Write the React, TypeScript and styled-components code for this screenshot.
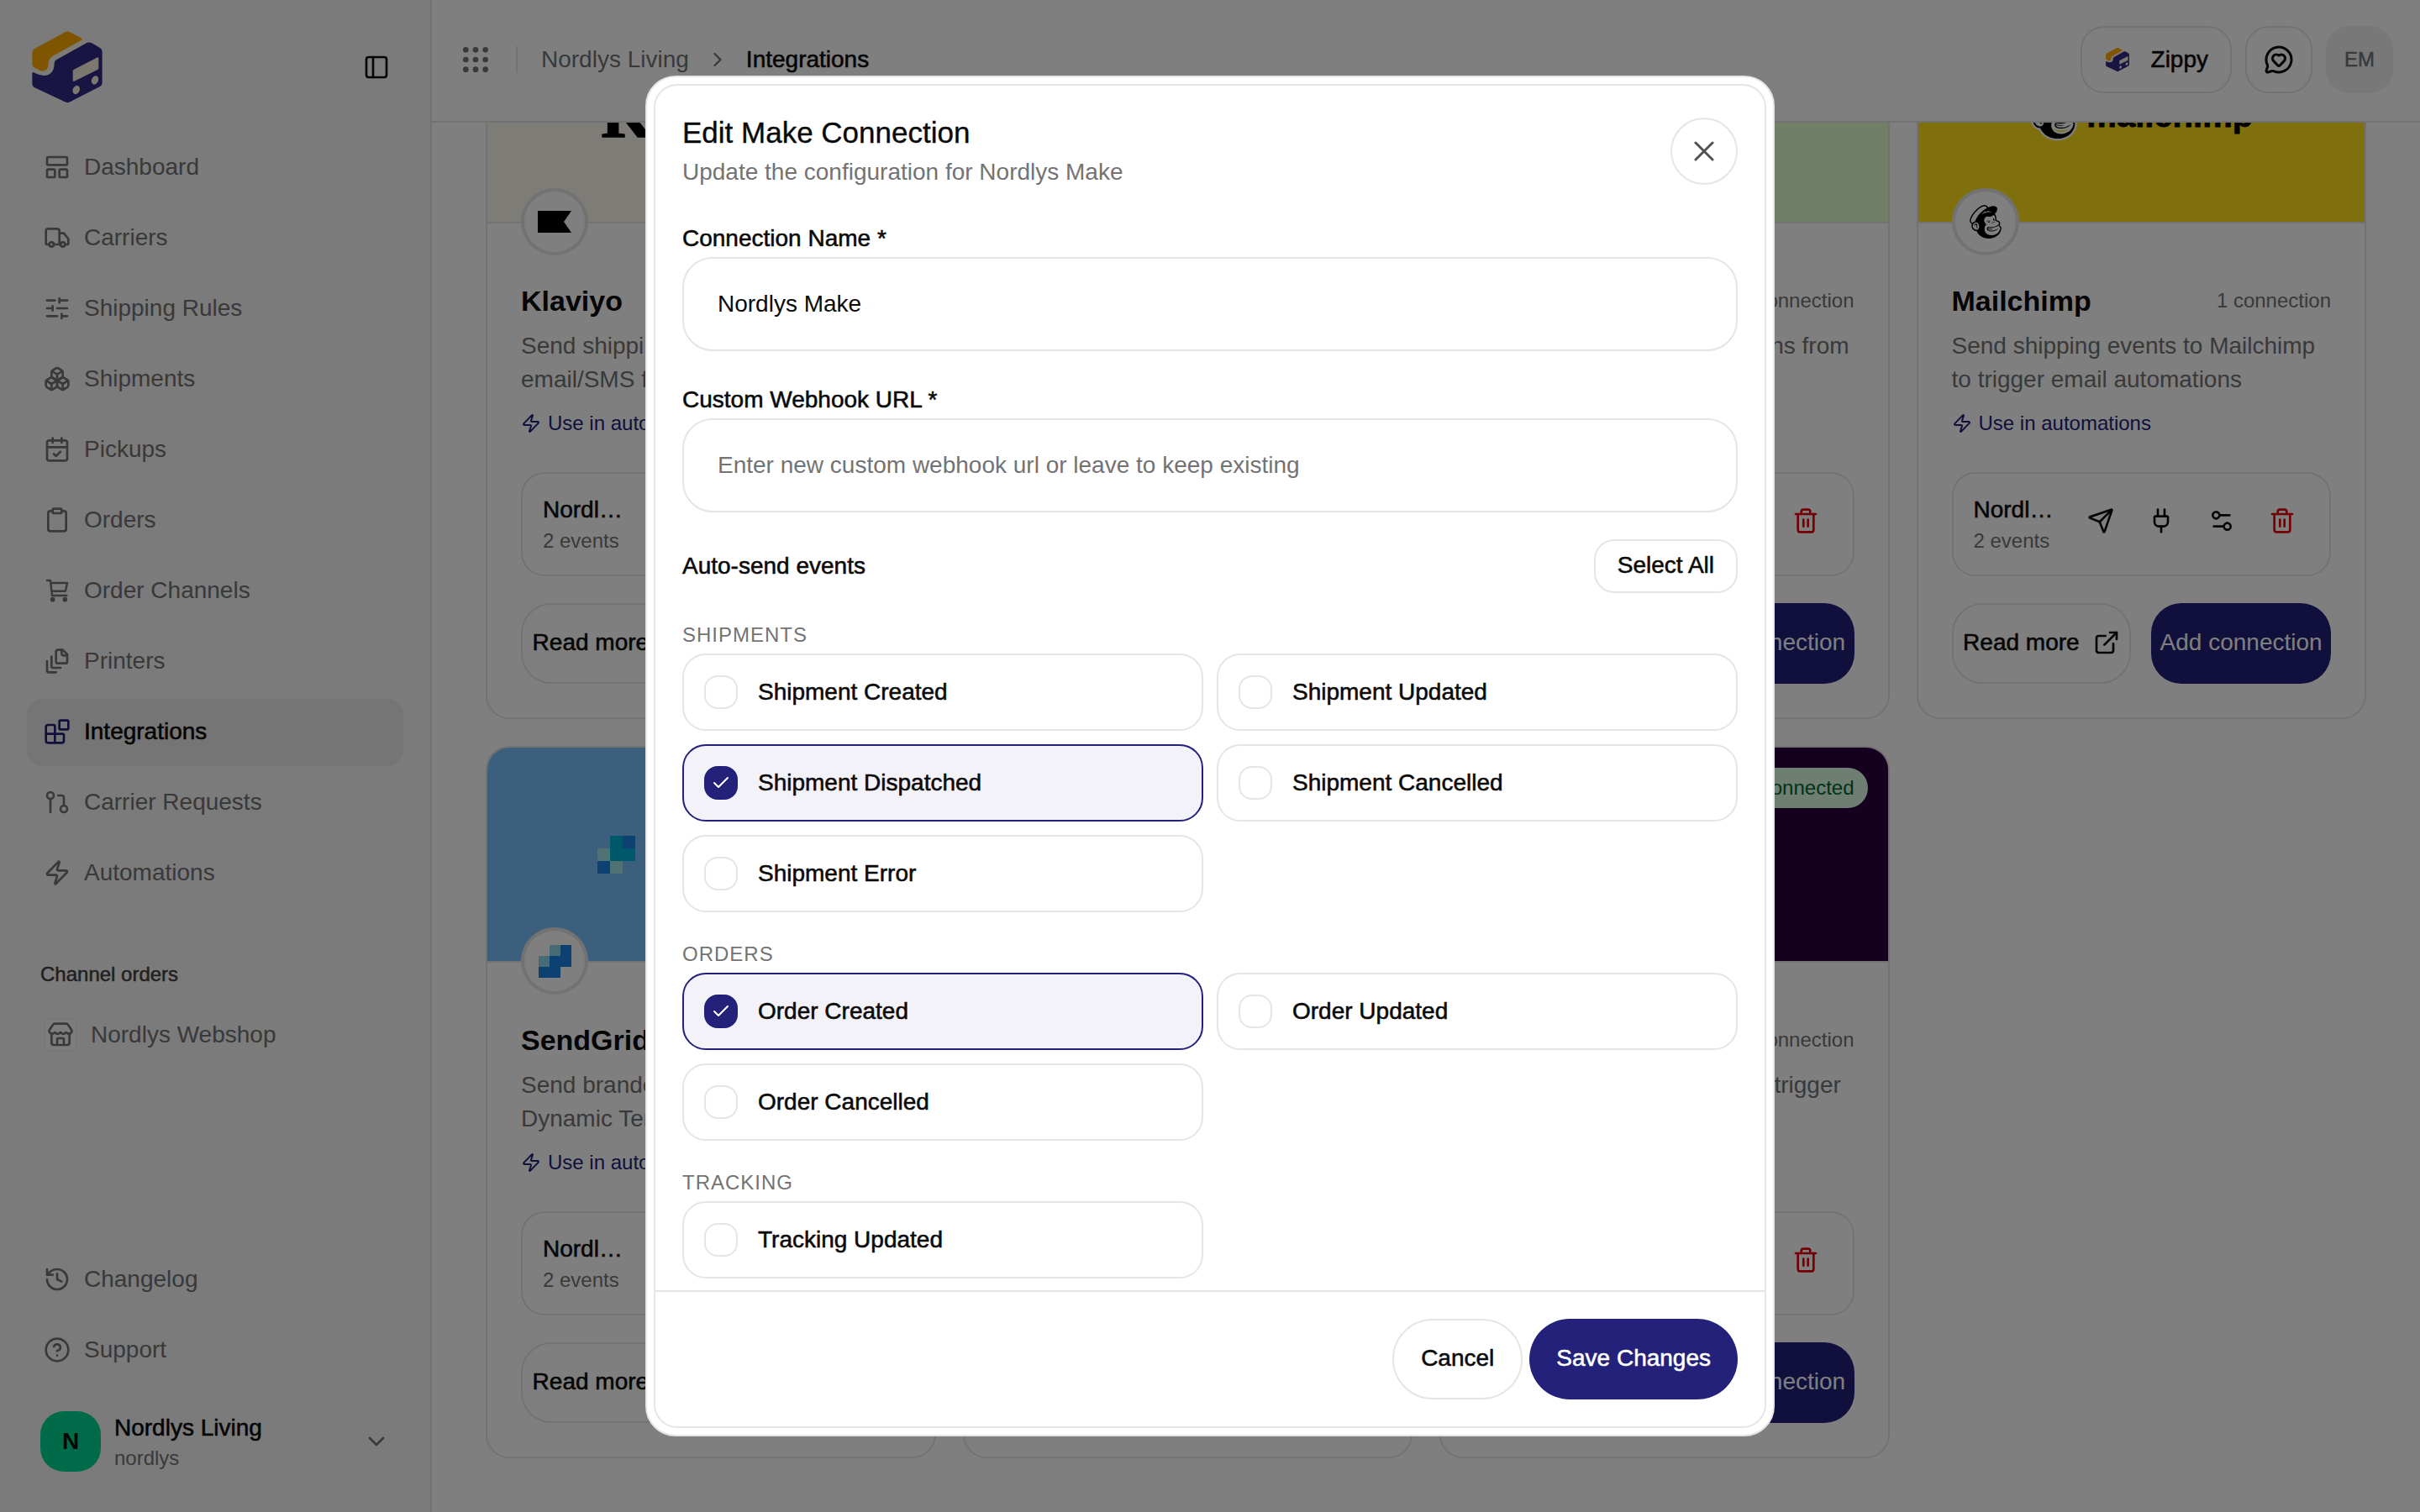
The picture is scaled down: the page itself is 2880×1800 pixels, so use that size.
import React, { useLayoutEffect, useRef, useState } from 'react';
import styled, { createGlobalStyle, css } from 'styled-components';
import {
  PanelLeft, LayoutPanelTop, Truck, SlidersHorizontal, Boxes, CalendarCheck, Clipboard, Blocks,
  GitPullRequest, Zap, History, HelpCircle, Store, ChevronDown, ChevronRight, Grip,
  MessageCircleHeart, Send, Plug, Settings2, Trash2, ExternalLink, X, Check,
} from 'lucide-react';
import { SiMailchimp } from 'react-icons/si';

const color = {
  ink: '#0a0a0a',
  muted: '#737373',
  line: '#e5e5e5',
  navy: '#232179',
  tint: '#f3f2f8',
  side: '#f6f6f6',
  hover: '#eaeaea',
};

const GlobalStyle = createGlobalStyle`
  *, *::before, *::after { box-sizing: border-box; }
  html, body { margin: 0; height: 100%; }
  body, button, input {
    font-family: "Liberation Sans", Arial, sans-serif;
    font-size: 28px;
    line-height: 40px;
    color: ${color.ink};
  }
  body { background: #fff; overflow: hidden; }
  h1, h2, h3, h4, p, ul, fieldset { margin: 0; padding: 0; border: 0; font-size: 28px; font-weight: 400; }
  ul { list-style: none; }
  a { color: inherit; text-decoration: none; }
  button { background: none; border: 0; padding: 0; cursor: pointer; }
  svg { flex: none; display: block; }
`;

const medium = css`
  font-weight: 500;
  -webkit-text-stroke: 0.02em currentColor;
`;

/* ---------- page frame ---------- */

const Shell = styled.div`
  display: grid;
  grid-template-columns: 514px minmax(0, 1fr);
  height: 100vh;
`;

const Sidebar = styled.aside`
  display: flex;
  flex-direction: column;
  min-height: 0;
  padding: 32px;
  background: ${color.side};
  border-right: 2px solid ${color.line};
`;

const SidebarTop = styled.div`
  display: flex;
  align-items: center;
  justify-content: space-between;
  height: 96px;
  padding-right: 16px;
  margin-bottom: 32px;
`;

const NavList = styled.ul`
  display: flex;
  flex-direction: column;
  gap: 4px;
`;

const NavLink = styled.a<{ $active?: boolean }>`
  display: flex;
  align-items: center;
  gap: 16px;
  height: 80px;
  padding: 0 20px 2px;
  border-radius: 20px;
  color: ${color.muted};
  ${p => p.$active && css`
    ${medium}
    background: ${color.hover};
    color: ${color.ink};
    svg { color: ${color.navy}; }
  `}
`;

const GroupTitle = styled.h2`
  ${medium}
  margin-top: 60px;
  padding-left: 16px;
  font-size: 24px;
  line-height: 40px;
  color: #404040;
`;

const ChannelLink = styled.a`
  display: flex;
  align-items: center;
  gap: 16px;
  height: 80px;
  margin-top: 12px;
  padding-left: 20px;
  color: ${color.muted};
`;

const ChannelIcon = styled.span`
  display: grid;
  place-items: center;
  width: 40px;
  height: 40px;
  border: 2px solid #efefef;
  border-radius: 8px;
  background: #fafafa;
`;

const SidebarBottom = styled.div`
  margin-top: auto;
`;

const Account = styled.button`
  display: grid;
  grid-template-columns: 72px 1fr 32px;
  align-items: center;
  gap: 16px;
  width: 100%;
  margin: 28px 0 12px;
  padding: 4px 16px;
  text-align: left;
`;

const AccountMark = styled.span`
  display: grid;
  place-items: center;
  height: 72px;
  border-radius: 28px;
  background: #00d492;
  font-weight: 700;
`;

const AccountText = styled.span`
  display: flex;
  flex-direction: column;
  strong { ${medium} line-height: 40px; }
  small { font-size: 24px; line-height: 32px; color: ${color.muted}; }
`;

const Main = styled.div`
  display: flex;
  flex-direction: column;
  min-width: 0;
  min-height: 0;
`;

const Header = styled.header`
  display: flex;
  align-items: center;
  height: 146px;
  flex: none;
  padding: 0 32px 2px;
  border-bottom: 2px solid ${color.line};
`;

const Crumbs = styled.nav`
  display: flex;
  align-items: center;
  gap: 20px;
  padding-left: 28px;
  color: ${color.muted};
`;

const Divider = styled.span`
  width: 2px;
  height: 32px;
  background: ${color.line};
`;

const CrumbNow = styled.span`
  ${medium}
  color: ${color.ink};
`;

const HeaderLeft = styled.div`
  display: flex;
  align-items: center;
  button + span { margin-left: 28px; }
`;

const HeaderRight = styled.div`
  display: flex;
  gap: 16px;
  margin-left: auto;
`;

const HeaderButton = styled.button`
  ${medium}
  display: flex;
  align-items: center;
  justify-content: center;
  gap: 24px;
  min-width: 80px;
  height: 80px;
  padding: 0 26px;
  border: 2px solid ${color.line};
  border-radius: 28px;
`;

const IconButton = styled(HeaderButton)`
  padding: 0;
`;

const Initials = styled(HeaderButton)`
  padding: 0;
  border-color: #f1f1f1;
  background: #f1f1f1;
  font-size: 24px;
  color: ${color.muted};
`;

const Scroll = styled.main`
  flex: 1;
  min-height: 0;
  overflow-y: auto;
  scrollbar-width: none;
  padding: 64px;
`;

/* ---------- integration cards ---------- */

const CardGrid = styled.div`
  display: grid;
  grid-template-columns: repeat(4, minmax(0, 1fr));
  gap: 32px;
`;

const Card = styled.article`
  display: flex;
  flex-direction: column;
  border: 2px solid ${color.line};
  border-radius: 28px;
  overflow: hidden;
`;

const Banner = styled.div<{ $bg: string }>`
  position: relative;
  display: flex;
  align-items: center;
  justify-content: center;
  gap: 12px;
  height: 256px;
  border-bottom: 2px solid ${color.line};
  background: ${p => p.$bg};
`;

const Wordmark = styled.span<{ $size: number; $ink?: string; $serif?: boolean }>`
  font-family: ${p => (p.$serif ? '"Liberation Serif", serif' : '"Liberation Sans", sans-serif')};
  font-size: ${p => p.$size}px;
  line-height: 1;
  font-weight: 700;
  color: ${p => p.$ink || '#000'};
  -webkit-text-stroke: 0.02em currentColor;
`;

const Status = styled.span`
  position: absolute;
  top: 24px;
  right: 24px;
  padding: 8px 16px;
  border-radius: 24px;
  background: #dcfce7;
  font-size: 24px;
  line-height: 32px;
  color: #016630;
`;

const Badge = styled.span`
  position: absolute;
  left: 40px;
  bottom: -40px;
  display: grid;
  place-items: center;
  width: 80px;
  height: 80px;
  border: 4px solid ${color.line};
  border-radius: 50%;
  background: #fff;
`;

const CardBody = styled.div`
  padding: 68px 40px 40px;
`;

const CardHead = styled.div`
  display: flex;
  align-items: center;
  justify-content: space-between;
  h3 { font-size: 34px; line-height: 48px; font-weight: 700; }
  span { font-size: 24px; color: ${color.muted}; }
`;

const CardText = styled.p`
  min-height: 80px;
  margin-top: 10px;
  color: ${color.muted};
`;

const AutomationLink = styled.a`
  display: flex;
  align-items: center;
  gap: 8px;
  margin-top: 16px;
  font-size: 24px;
  line-height: 32px;
  color: ${color.navy};
`;

const Connection = styled.div`
  display: flex;
  align-items: flex-start;
  gap: 16px;
  height: 124px;
  margin-top: 42px;
  padding: 24px;
  border: 2px solid ${color.line};
  border-radius: 28px;
`;

const ConnectionText = styled.div`
  flex: 1;
  min-width: 0;
  h4 { ${medium} line-height: 38px; overflow: hidden; text-overflow: ellipsis; white-space: nowrap; }
  p { padding-top: 2px; font-size: 24px; line-height: 32px; color: ${color.muted}; }
`;

const Tools = styled.div`
  display: flex;
  gap: 8px;
`;

const ToolButton = styled.button<{ $danger?: boolean }>`
  display: grid;
  place-items: center;
  width: 64px;
  height: 64px;
  color: ${p => (p.$danger ? '#e7000b' : color.ink)};
`;

const CardActions = styled.div`
  display: grid;
  grid-template-columns: 1fr 1fr;
  gap: 24px;
  margin-top: 32px;
`;

const outline = css`
  border: 2px solid ${color.line};
  background: #fff;
`;

const filled = css`
  background: ${color.navy};
  color: #fff;
`;

const CardButton = styled.button<{ $primary?: boolean }>`
  display: flex;
  align-items: center;
  justify-content: center;
  gap: 16px;
  height: 96px;
  padding-bottom: 2px;
  border-radius: 36px;
  white-space: nowrap;
  ${p => (p.$primary ? filled : css`${outline} ${medium}`)}
`;

/* ---------- dialog ---------- */

const Overlay = styled.div`
  position: fixed;
  inset: 0;
  display: grid;
  place-items: center;
  background: rgba(0, 0, 0, 0.5);
`;

const DialogFrame = styled.div`
  display: flex;
  width: min(1344px, 94vw);
  height: 90vh;
  padding: 8px;
  border: 2px solid ${color.line};
  border-radius: 36px;
  background: #fff;
`;

const DialogPanel = styled.form`
  display: flex;
  flex-direction: column;
  flex: 1;
  min-width: 0;
  border: 2px solid ${color.line};
  border-radius: 28px;
`;

const DialogHead = styled.div`
  display: flex;
  align-items: center;
  justify-content: space-between;
  height: 92px;
  margin: 32px 32px 0;
  h2 { font-size: 35px; line-height: 46px; -webkit-text-stroke: 0.01em currentColor; }
  p { margin-top: 4px; color: ${color.muted}; }
`;

const CloseButton = styled.button`
  display: grid;
  place-items: center;
  width: 80px;
  height: 80px;
  border: 2px solid ${color.line};
  border-radius: 50%;
  color: #525252;
`;

const DialogBody = styled.div`
  flex: 1;
  min-height: 0;
  overflow-y: auto;
  scrollbar-width: none;
  margin-top: 36px;
  padding: 0 32px;
`;

const Field = styled.div`
  display: flex;
  flex-direction: column;
  & + & { margin-top: 36px; }
  label { ${medium} line-height: 44px; }
`;

const TextInput = styled.input`
  width: 100%;
  height: 112px;
  padding: 0 40px;
  border: 2px solid ${color.line};
  border-radius: 36px;
  background: #fff;
  outline: none;
  &::placeholder { color: ${color.muted}; opacity: 1; }
`;

const EventsHead = styled.div`
  display: flex;
  align-items: center;
  justify-content: space-between;
  margin-top: 32px;
  h3 { ${medium} }
`;

const SelectAll = styled.button`
  ${medium}
  ${outline}
  height: 64px;
  padding: 0 26px 2px;
  border-radius: 24px;
`;

const EventGroup = styled.fieldset`
  margin-top: 32px;
  min-width: 0;
  legend {
    padding: 0;
    margin-bottom: 4px;
    font-size: 24px;
    line-height: 36px;
    letter-spacing: 1px;
    text-transform: uppercase;
    color: ${color.muted};
  }
`;

const EventGrid = styled.div`
  display: grid;
  grid-template-columns: 1fr 1fr;
  gap: 16px;
`;

const EventOption = styled.label<{ $on: boolean }>`
  ${medium}
  display: flex;
  align-items: center;
  gap: 24px;
  height: 92px;
  padding: 0 24px;
  border: 2px solid ${p => (p.$on ? color.navy : color.line)};
  border-radius: 28px;
  background: ${p => (p.$on ? color.tint : '#fff')};
`;

const Tick = styled.span`
  display: grid;
  place-items: center;
  width: 40px;
  height: 40px;
  color: #fff;
  > * { grid-area: 1 / 1; }
  svg { pointer-events: none; z-index: 1; }
  input {
    appearance: none;
    width: 40px;
    height: 40px;
    margin: 0;
    border: 2px solid ${color.line};
    border-radius: 16px;
    background: #fff;
  }
  input:checked { border-color: ${color.navy}; background: ${color.navy}; }
`;

const DialogFoot = styled.div`
  display: flex;
  justify-content: flex-end;
  gap: 8px;
  padding: 32px;
  border-top: 2px solid ${color.line};
`;

const FootButton = styled.button<{ $primary?: boolean }>`
  ${medium}
  ${p => (p.$primary ? filled : outline)}
  height: 96px;
  padding: 0 32px 2px;
  border-radius: 48px;
`;

/* ---------- drawings ---------- */

const Logo = ({ size }: { size: number }) => (
  <svg width={size} height={size} viewBox="36 36 288 288" aria-hidden="true">
    <path fill="#fbf6ea" d="M60 118 L181 55 L300 115 V245 L181 305 L60 248Z" />
    <path fill="#ffab00" d="M55 130 Q55 118 65 113 L172 55 Q181 50 190 55 L230 76 Q236 80 230 84 L132 138 Q114 148 113 165 Q112 185 104 190 Q95 196 84 192 L62 181 Q55 177 55 170Z" />
    <path fill="#312a86" d="M55 202 Q55 197 60 199 Q102 220 122 200 Q134 190 134 165 Q134 157 142 153 L250 93 Q259 89 268 94 L296 110 Q305 115 305 126 V236 Q305 243 298 248 L190 304 Q181 309 172 304 L62 252 Q55 248 55 240Z" />
    <path fill="#f9f1df" d="M200 194 Q200 190 204 188 L288 145 Q292 143 292 148 V182 Q292 187 288 189 L205 230 Q200 232 200 227Z" />
    <ellipse fill="#f9f1df" cx="212" cy="261" rx="12" ry="16" transform="rotate(25 212 261)" />
    <ellipse fill="#f9f1df" cx="279" cy="226" rx="12" ry="16" transform="rotate(25 279 226)" />
  </svg>
);

const strokeProps = {
  width: 32, height: 32, viewBox: '0 0 24 24', fill: 'none', stroke: 'currentColor',
  strokeWidth: 2, strokeLinecap: 'round' as const, strokeLinejoin: 'round' as const,
};

const CartIcon = () => (
  <svg {...strokeProps} strokeWidth={1.8} aria-hidden="true">
    <path d="M3 3h3l1.5 13.5h13M6.2 5.2h14.8l-1.6 7.4H7.1" />
    <circle cx="8" cy="20" r="1.2" fill="currentColor" />
    <circle cx="19" cy="20" r="1.2" fill="currentColor" />
  </svg>
);

const FilesIcon = () => (
  <svg {...strokeProps} aria-hidden="true">
    <path d="M21 7h-3a2 2 0 0 1-2-2V2" />
    <path d="M21 6v6.5c0 .8-.7 1.5-1.5 1.5h-7c-.8 0-1.5-.7-1.5-1.5v-9c0-.8.7-1.5 1.5-1.5H17Z" />
    <path d="M7 8v8.8c0 .3.2.6.4.8.2.2.5.4.8.4H15" />
    <path d="M3 12v8.8c0 .3.2.6.4.8.2.2.5.4.8.4H11" />
  </svg>
);

const FlagMark = () => (
  <svg width="40" height="26" viewBox="0 0 40 26" aria-hidden="true">
    <path d="M0 0H40L31 13L40 26H0Z" />
  </svg>
);

type Cell = [number, number, string];
const Cells = ({ size, cells }: { size: number; cells: Cell[] }) => (
  <svg width={size} height={size} viewBox="0 0 3 3" shapeRendering="crispEdges" aria-hidden="true">
    {cells.map(([x, y, fill]) => <rect key={`${x}${y}`} x={x} y={y} width="1" height="1" fill={fill} />)}
  </svg>
);

const gridBanner: Cell[] = [
  [1, 0, '#00b2d6'], [2, 0, '#1a82e2'], [0, 1, '#a0e4e8'], [1, 1, '#00b2d6'], [2, 1, '#00b2d6'],
  [0, 2, '#1a82e2'], [1, 2, '#a0e4e8'],
];
const gridBadge: Cell[] = [
  [1, 0, '#8fd8ee'], [2, 0, '#1a82e2'], [0, 1, '#8fd8ee'], [1, 1, '#1a82e2'], [2, 1, '#1a82e2'],
  [0, 2, '#1a82e2'], [1, 2, '#1a82e2'],
];

const Freddie = styled(SiMailchimp)<{ $outlined?: boolean }>`
  color: #000;
  ${p => p.$outlined && css`
    overflow: visible;
    path { stroke: #fff; stroke-width: 2px; paint-order: stroke; }
  `}
`;

const MakeMark = () => (
  <svg width="40" height="32" viewBox="0 0 40 32" aria-hidden="true">
    <path fill="#b02de9" d="M8 2l8 4-9 24-7-4zM20 2h8l-4 28h-8zM31 2h8v28h-8z" />
  </svg>
);

/* ---------- data ---------- */

const navItems = [
  { label: 'Dashboard', icon: <LayoutPanelTop size={32} /> },
  { label: 'Carriers', icon: <Truck size={32} /> },
  { label: 'Shipping Rules', icon: <SlidersHorizontal size={32} /> },
  { label: 'Shipments', icon: <Boxes size={32} /> },
  { label: 'Pickups', icon: <CalendarCheck size={32} /> },
  { label: 'Orders', icon: <Clipboard size={32} /> },
  { label: 'Order Channels', icon: <CartIcon /> },
  { label: 'Printers', icon: <FilesIcon /> },
  { label: 'Integrations', icon: <Blocks size={32} /> },
  { label: 'Carrier Requests', icon: <GitPullRequest size={32} /> },
  { label: 'Automations', icon: <Zap size={32} /> },
];

const cards = [
  {
    name: 'Klaviyo', connection: 'Nordlys Klaviyo', bg: '#fdf8ee',
    text: 'Send shipping events to Klaviyo for email/SMS flows',
    banner: <Wordmark $size={78} $serif>Klaviyo</Wordmark>, badge: <FlagMark />,
  },
  {
    name: 'Slack', connection: 'Nordlys Slack', bg: '#f4ede4',
    text: 'Post shipping events to Slack channels',
    banner: <Wordmark $size={64}>slack</Wordmark>, badge: <Send size={36} />,
  },
  {
    name: 'Brevo', connection: 'Nordlys Brevo', bg: '#e2ffce',
    text: 'Trigger new email automations from shipment events',
    banner: <Wordmark $size={64} $ink="#0b996e">Brevo</Wordmark>, badge: <Send size={36} />,
  },
  {
    name: 'Mailchimp', connection: 'Nordlys Mailchimp', bg: '#ffe01b',
    text: 'Send shipping events to Mailchimp to trigger email automations',
    banner: <><Freddie size={56} $outlined /><Wordmark $size={40}>mailchimp</Wordmark></>,
    badge: <Freddie size={40} />,
  },
  {
    name: 'SendGrid', connection: 'Nordlys SendGrid', bg: '#7bbefd',
    text: 'Send branded emails via SendGrid Dynamic Templates',
    banner: <><Cells size={45} cells={gridBanner} /><Wordmark $size={47} $ink="#294661">SendGrid</Wordmark></>,
    badge: <Cells size={39} cells={gridBadge} />,
  },
  {
    name: 'Zapier', connection: 'Nordlys Zapier', bg: '#fff3eb',
    text: 'Send shipping events to Zapier workflows',
    banner: <Wordmark $size={64} $ink="#ff4f00">zapier</Wordmark>, badge: <Zap size={36} />,
  },
  {
    name: 'Make', connection: 'Nordlys Make', bg: '#2a0040',
    text: 'Send live shipping events to trigger Make scenarios',
    banner: <Wordmark $size={104} $ink="#fff">make</Wordmark>, badge: <MakeMark />,
  },
];

const groups = [
  { name: 'Shipments', events: ['Shipment Created', 'Shipment Updated', 'Shipment Dispatched', 'Shipment Cancelled', 'Shipment Error'] },
  { name: 'Orders', events: ['Order Created', 'Order Updated', 'Order Cancelled'] },
  { name: 'Tracking', events: ['Tracking Updated'] },
];

const IntegrationCard = ({ card }: { card: (typeof cards)[number] }) => (
  <Card>
    <Banner $bg={card.bg}>
      {card.banner}
      <Status>Connected</Status>
      <Badge>{card.badge}</Badge>
    </Banner>
    <CardBody>
      <CardHead><h3>{card.name}</h3><span>1 connection</span></CardHead>
      <CardText>{card.text}</CardText>
      <AutomationLink href="#automations"><Zap size={24} />Use in automations</AutomationLink>
      <Connection>
        <ConnectionText><h4>{card.connection}</h4><p>2 events</p></ConnectionText>
        <Tools>
          <ToolButton aria-label="Send test"><Send size={32} /></ToolButton>
          <ToolButton aria-label="Test connection"><Plug size={32} /></ToolButton>
          <ToolButton aria-label="Edit"><Settings2 size={32} /></ToolButton>
          <ToolButton aria-label="Delete" $danger><Trash2 size={32} /></ToolButton>
        </Tools>
      </Connection>
      <CardActions>
        <CardButton>Read more<ExternalLink size={32} /></CardButton>
        <CardButton $primary>Add connection</CardButton>
      </CardActions>
    </CardBody>
  </Card>
);

export default function App() {
  const scroller = useRef<HTMLElement>(null);
  const [name, setName] = useState('Nordlys Make');
  const [url, setUrl] = useState('');
  const [selected, setSelected] = useState<string[]>(['Shipment Dispatched', 'Order Created']);

  useLayoutEffect(() => {
    if (scroller.current) scroller.current.scrollTop = scroller.current.scrollHeight;
  }, []);

  const toggle = (event: string) =>
    setSelected(now => (now.includes(event) ? now.filter(e => e !== event) : [...now, event]));

  return (
    <>
      <GlobalStyle />
      <Shell>
        <Sidebar>
          <SidebarTop>
            <Logo size={96} />
            <button aria-label="Toggle sidebar"><PanelLeft size={32} /></button>
          </SidebarTop>
          <nav>
            <NavList>
              {navItems.map(item => (
                <li key={item.label}>
                  <NavLink href="#" $active={item.label === 'Integrations'}>{item.icon}{item.label}</NavLink>
                </li>
              ))}
            </NavList>
          </nav>
          <GroupTitle>Channel orders</GroupTitle>
          <ChannelLink href="#"><ChannelIcon><Store size={32} /></ChannelIcon>Nordlys Webshop</ChannelLink>
          <SidebarBottom>
            <NavList>
              <li><NavLink href="#"><History size={32} />Changelog</NavLink></li>
              <li><NavLink href="#"><HelpCircle size={32} />Support</NavLink></li>
            </NavList>
            <Account>
              <AccountMark>N</AccountMark>
              <AccountText><strong>Nordlys Living</strong><small>nordlys</small></AccountText>
              <ChevronDown size={32} color={color.muted} />
            </Account>
          </SidebarBottom>
        </Sidebar>

        <Main>
          <Header>
            <HeaderLeft>
              <button aria-label="Apps"><Grip size={40} color={color.muted} /></button>
              <Divider />
              <Crumbs>
                <a href="#">Nordlys Living</a>
                <ChevronRight size={28} />
                <CrumbNow>Integrations</CrumbNow>
              </Crumbs>
            </HeaderLeft>
            <HeaderRight>
              <HeaderButton><Logo size={32} />Zippy</HeaderButton>
              <IconButton aria-label="Feedback"><MessageCircleHeart size={36} /></IconButton>
              <Initials>EM</Initials>
            </HeaderRight>
          </Header>
          <Scroll ref={scroller}>
            <CardGrid>
              {cards.map(card => <IntegrationCard key={card.name} card={card} />)}
            </CardGrid>
          </Scroll>
        </Main>
      </Shell>

      <Overlay>
        <DialogFrame role="dialog" aria-modal="true" aria-labelledby="dialog-title">
          <DialogPanel onSubmit={e => e.preventDefault()}>
            <DialogHead>
              <div>
                <h2 id="dialog-title">Edit Make Connection</h2>
                <p>Update the configuration for Nordlys Make</p>
              </div>
              <CloseButton type="button" aria-label="Close"><X size={40} strokeWidth={1.8} /></CloseButton>
            </DialogHead>
            <DialogBody>
              <Field>
                <label htmlFor="name">Connection Name *</label>
                <TextInput id="name" value={name} onChange={e => setName(e.target.value)} />
              </Field>
              <Field>
                <label htmlFor="url">Custom Webhook URL *</label>
                <TextInput
                  id="url"
                  value={url}
                  onChange={e => setUrl(e.target.value)}
                  placeholder="Enter new custom webhook url or leave to keep existing"
                />
              </Field>
              <EventsHead>
                <h3>Auto-send events</h3>
                <SelectAll type="button" onClick={() => setSelected(groups.flatMap(g => g.events))}>Select All</SelectAll>
              </EventsHead>
              {groups.map(group => (
                <EventGroup key={group.name}>
                  <legend>{group.name}</legend>
                  <EventGrid>
                    {group.events.map(event => {
                      const on = selected.includes(event);
                      return (
                        <EventOption key={event} $on={on}>
                          <Tick>
                            <input type="checkbox" checked={on} onChange={() => toggle(event)} />
                            {on && <Check size={24} />}
                          </Tick>
                          {event}
                        </EventOption>
                      );
                    })}
                  </EventGrid>
                </EventGroup>
              ))}
            </DialogBody>
            <DialogFoot>
              <FootButton type="button">Cancel</FootButton>
              <FootButton type="submit" $primary>Save Changes</FootButton>
            </DialogFoot>
          </DialogPanel>
        </DialogFrame>
      </Overlay>
    </>
  );
}
